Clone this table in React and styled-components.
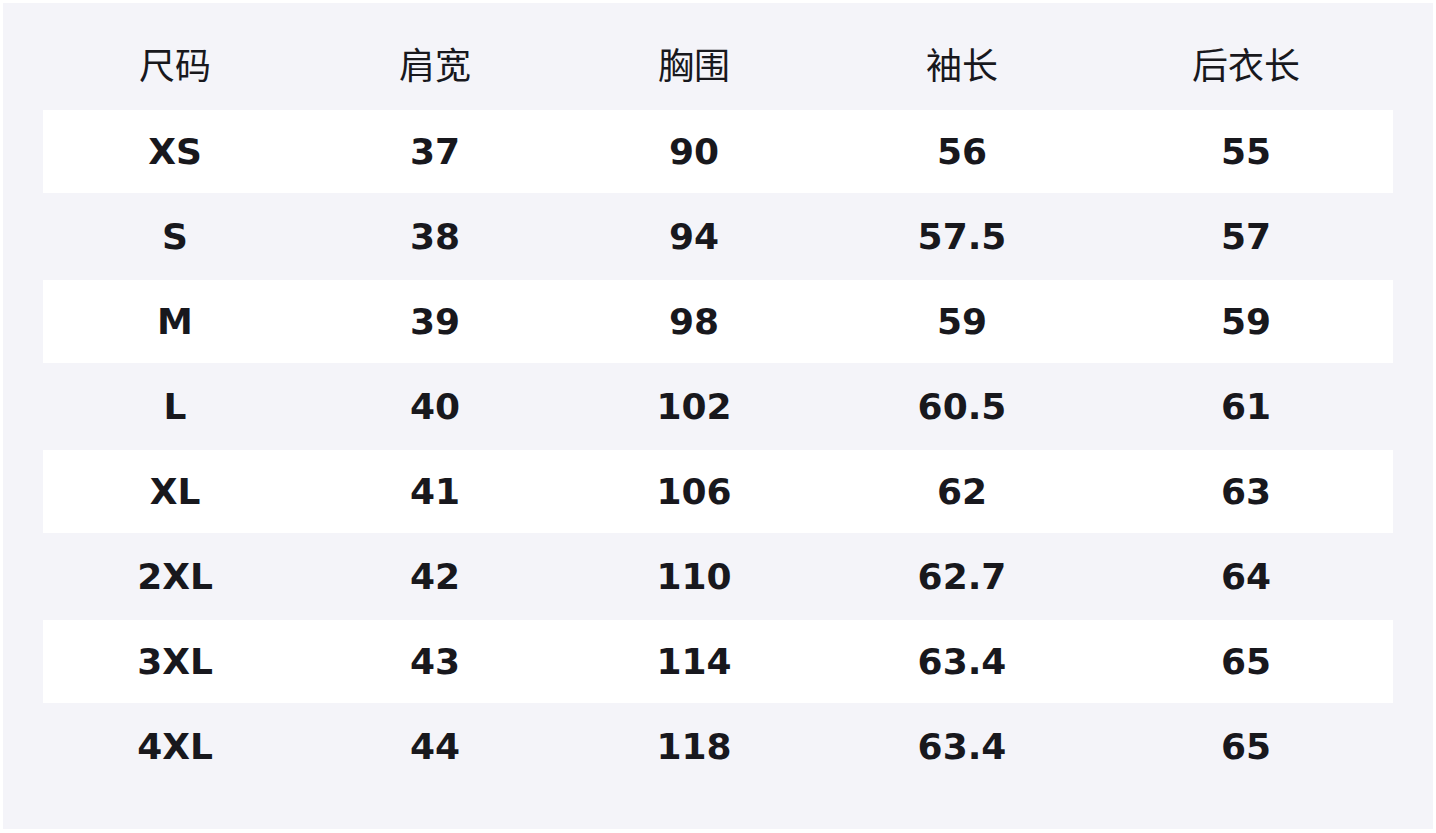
import styled, { createGlobalStyle } from "styled-components";

const GlobalStyle = createGlobalStyle`
  html, body {
    margin: 0;
    padding: 0;
    background: #ffffff;
  }
  * {
    box-sizing: border-box;
  }
`;

const Panel = styled.div`
  margin: 3px;
  height: 826px;
  padding: 22px 40px 39px;
  background-color: #f4f4f9;
  color: #18181d;
`;

const Grid = styled.div`
  display: grid;
  grid-template-columns: 264px 256px 262px 274px 294px;
`;

const Row = styled.div`
  display: contents;
`;

const HeadCell = styled.div`
  height: 85px;
  padding-bottom: 9px;
  display: flex;
  align-items: center;
  justify-content: center;
  font-family: "Noto Sans CJK SC", "Noto Sans", sans-serif;
  font-size: 36px;
  font-weight: 400;
`;

const Cell = styled.div`
  height: ${(p) => (p.$white ? "83px" : "87px")};
  background-color: ${(p) => (p.$white ? "#ffffff" : "transparent")};
  display: flex;
  align-items: center;
  justify-content: center;
  font-family: "DejaVu Sans", "Noto Sans CJK SC", sans-serif;
  font-size: 36px;
  font-weight: 700;
`;

const headers = ["尺码", "肩宽", "胸围", "袖长", "后衣长"];

const rows = [
  ["XS", "37", "90", "56", "55"],
  ["S", "38", "94", "57.5", "57"],
  ["M", "39", "98", "59", "59"],
  ["L", "40", "102", "60.5", "61"],
  ["XL", "41", "106", "62", "63"],
  ["2XL", "42", "110", "62.7", "64"],
  ["3XL", "43", "114", "63.4", "65"],
  ["4XL", "44", "118", "63.4", "65"],
];

const App = () => {
  return (
    <>
      <GlobalStyle />
      <Panel>
        <Grid>
          <Row>
            {headers.map((h) => (
              <HeadCell key={h}>{h}</HeadCell>
            ))}
          </Row>
          {rows.map((r, i) => (
            <Row key={r[0]}>
              {r.map((v, j) => (
                <Cell key={j} $white={i % 2 === 0}>
                  {v}
                </Cell>
              ))}
            </Row>
          ))}
        </Grid>
      </Panel>
    </>
  );
};

export default App;
